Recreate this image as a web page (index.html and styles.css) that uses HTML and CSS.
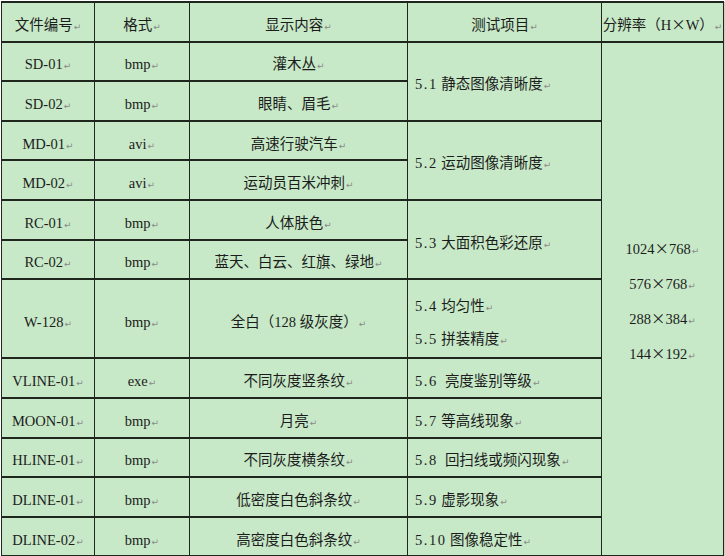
FILE: index.html
```html
<!DOCTYPE html>
<html lang="zh-CN">
<head>
<meta charset="utf-8">
<title>测试图像</title>
<link rel="stylesheet" href="styles.css">
</head>
<body>
<table class="spec">
  <colgroup>
    <col class="c1"><col class="c2"><col class="c3"><col class="c4"><col class="c5">
  </colgroup>
  <tr class="head">
    <th>文件编号<span class="pm">↵</span></th>
    <th>格式<span class="pm">↵</span></th>
    <th>显示内容<span class="pm">↵</span></th>
    <th>测试项目<span class="pm">↵</span></th>
    <th>分辨率（H<span class="fw">×</span>W）<span class="pm">↵</span></th>
  </tr>
  <tr>
    <td>SD-01<span class="pm">↵</span></td>
    <td>bmp<span class="pm">↵</span></td>
    <td>灌木丛<span class="pm">↵</span></td>
    <td class="item" rowspan="2"><span class="num">5.1</span> 静态图像清晰度<span class="pm">↵</span></td>
    <td class="res" rowspan="12">
      <div class="reslist">
        <div>1024<span class="fw">×</span>768<span class="pm">↵</span></div>
        <div>576<span class="fw">×</span>768<span class="pm">↵</span></div>
        <div>288<span class="fw">×</span>384<span class="pm">↵</span></div>
        <div>144<span class="fw">×</span>192<span class="pm">↵</span></div>
      </div>
    </td>
  </tr>
  <tr>
    <td>SD-02<span class="pm">↵</span></td>
    <td>bmp<span class="pm">↵</span></td>
    <td>眼睛、眉毛<span class="pm">↵</span></td>
  </tr>
  <tr>
    <td>MD-01<span class="pm">↵</span></td>
    <td>avi<span class="pm">↵</span></td>
    <td>高速行驶汽车<span class="pm">↵</span></td>
    <td class="item" rowspan="2"><span class="num">5.2</span> 运动图像清晰度<span class="pm">↵</span></td>
  </tr>
  <tr>
    <td>MD-02<span class="pm">↵</span></td>
    <td>avi<span class="pm">↵</span></td>
    <td>运动员百米冲刺<span class="pm">↵</span></td>
  </tr>
  <tr>
    <td>RC-01<span class="pm">↵</span></td>
    <td>bmp<span class="pm">↵</span></td>
    <td>人体肤色<span class="pm">↵</span></td>
    <td class="item" rowspan="2"><span class="num">5.3</span> 大面积色彩还原<span class="pm">↵</span></td>
  </tr>
  <tr>
    <td>RC-02<span class="pm">↵</span></td>
    <td>bmp<span class="pm">↵</span></td>
    <td>蓝天、白云、红旗、绿地<span class="pm">↵</span></td>
  </tr>
  <tr class="tall">
    <td>W-128<span class="pm">↵</span></td>
    <td>bmp<span class="pm">↵</span></td>
    <td>全白（128 级灰度）<span class="pm">↵</span></td>
    <td class="item">
      <div class="twolines">
        <div><span class="num">5.4</span> 均匀性<span class="pm">↵</span></div>
        <div><span class="num">5.5</span> 拼装精度<span class="pm">↵</span></div>
      </div>
    </td>
  </tr>
  <tr>
    <td>VLINE-01<span class="pm">↵</span></td>
    <td>exe<span class="pm">↵</span></td>
    <td>不同灰度竖条纹<span class="pm">↵</span></td>
    <td class="item"><span class="num">5.6</span>&nbsp; 亮度鉴别等级<span class="pm">↵</span></td>
  </tr>
  <tr>
    <td>MOON-01<span class="pm">↵</span></td>
    <td>bmp<span class="pm">↵</span></td>
    <td>月亮<span class="pm">↵</span></td>
    <td class="item"><span class="num">5.7</span> 等高线现象<span class="pm">↵</span></td>
  </tr>
  <tr>
    <td>HLINE-01<span class="pm">↵</span></td>
    <td>bmp<span class="pm">↵</span></td>
    <td>不同灰度横条纹<span class="pm">↵</span></td>
    <td class="item"><span class="num">5.8</span>&nbsp; 回扫线或频闪现象<span class="pm">↵</span></td>
  </tr>
  <tr>
    <td>DLINE-01<span class="pm">↵</span></td>
    <td>bmp<span class="pm">↵</span></td>
    <td>低密度白色斜条纹<span class="pm">↵</span></td>
    <td class="item"><span class="num">5.9</span> 虚影现象<span class="pm">↵</span></td>
  </tr>
  <tr>
    <td>DLINE-02<span class="pm">↵</span></td>
    <td>bmp<span class="pm">↵</span></td>
    <td>高密度白色斜条纹<span class="pm">↵</span></td>
    <td class="item"><span class="num">5.10</span> 图像稳定性<span class="pm">↵</span></td>
  </tr>
</table>
</body>
</html>
```

FILE: styles.css
```css
html, body {
  margin: 0;
  padding: 0;
  background: #ffffff;
}

body {
  padding: 1px 0 0 1px;
  font-family: "Liberation Serif", "Noto Sans CJK SC", serif;
  font-size: 14.5px;
  color: #1c1c1c;
}

.spec {
  border-collapse: collapse;
  table-layout: fixed;
  width: 722px;
  background: #c7e9c7;
  box-shadow: 2px 0 0 -1px #c8cfc8;
}

.c1 { width: 93px; }
.c2 { width: 95px; }
.c3 { width: 218px; }
.c4 { width: 194px; }
.c5 { width: 122px; }

.spec th,
.spec td {
  border: 1px solid #1e261e;
  border-width: 2px 1px;
  padding: 6px 0 0 0;
  height: 39.6px;
  box-sizing: border-box;
  text-align: center;
  vertical-align: middle;
  font-weight: normal;
  white-space: nowrap;
  line-height: 20px;
}

.spec tr.tall td {
  height: 79.2px;
}

.spec td.item {
  text-align: left;
  padding-left: 7px;
}

.num {
  letter-spacing: 1.5px;
}

.fw {
  font-family: "Noto Sans CJK SC", sans-serif;
  line-height: 1;
}

.twolines {
  display: flex;
  flex-direction: column;
  gap: 13px;
  padding-top: 2px;
}

.reslist {
  display: flex;
  flex-direction: column;
  gap: 15px;
  padding-top: 0;
}

.reslist div,
.twolines div {
  height: 20px;
}

.pm {
  font-size: 9px;
  line-height: 1;
  color: #8a8a8a;
  margin-left: 1px;
  font-family: "DejaVu Sans", sans-serif;
}
```
